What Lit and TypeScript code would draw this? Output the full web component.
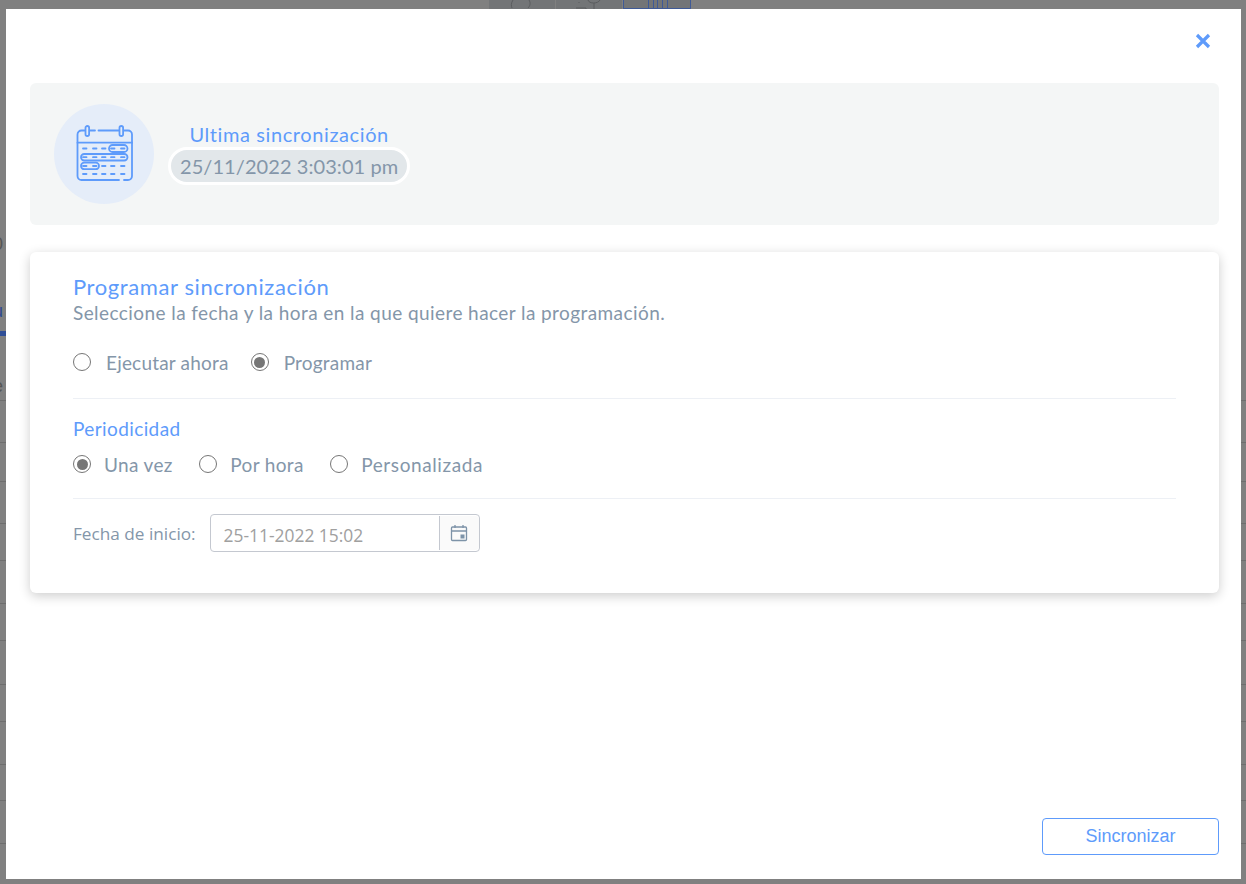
import { LitElement, html, css, svg } from "lit";
import { customElement } from "lit/decorators.js";

const ROWS = [171, 42, 39, 42, 37, 43, 37, 44, 37, 43, 36, 43];

@customElement("app-root")
export class AppRoot extends LitElement {
  static styles = css`
    :host {
      display: block;
      position: relative;
      width: 1246px;
      height: 884px;
      overflow: hidden;
      background: #808080;
      font-family: "Lato", "Liberation Sans", sans-serif;
    }
    .backdrop { position: absolute; inset: 0; overflow: hidden; }
    .thumbs { position: absolute; left: 489px; top: 0; display: flex; gap: 1px; height: 9px; }
    .thumb { width: 66px; background: #737577; }
    .thumb svg { display: block; width: 100%; height: 100%; }
    .thumb.blue { border: 1px solid #3f5a96; border-top: 0; box-sizing: border-box; width: 68px; }
    .rows { position: absolute; left: 0; right: 0; top: 230px; }
    .row { border-bottom: 1px solid #6e6e6e; box-sizing: border-box; }
    .tab { position: absolute; left: 0; top: 331px; width: 6px; height: 5px; background: #304f97; }
    .glyph { position: absolute; left: -7px; color: #555; font-size: 18px; line-height: 20px; font-family: "Liberation Sans", sans-serif; }
    .g1 { top: 234px; }
    .g2 { top: 301px; color: #2e4a8f; }
    .g3 { top: 376px; }

    .modal {
      position: absolute;
      left: 6px;
      top: 9px;
      width: 1235px;
      height: 870px;
      box-sizing: border-box;
      background: #fff;
      padding: 0 22px 24px 24px;
      display: flex;
      flex-direction: column;
    }
    .close { height: 74px; display: flex; justify-content: flex-end; padding: 24px 8px 0 0; box-sizing: border-box; }
    .close svg { width: 16px; height: 16px; }
    .status {
      height: 142px;
      background: #f4f6f6;
      border-radius: 6px;
      display: flex;
      align-items: center;
      padding-left: 24px;
      gap: 14px;
      box-sizing: border-box;
    }
    .circle { width: 100px; height: 100px; border-radius: 50%; background: #e5edf9; display: flex; align-items: center; justify-content: center; }
    .circle svg { width: 60px; height: 60px; }
    .meta { display: flex; flex-direction: column; align-items: center; margin-top: -3px; }
    .meta .t { color: #5e9bfb; font-size: 20px; line-height: 26px; letter-spacing: 0.6px; }
    .pill {
      background: #e2e7ea;
      border: 3px solid #fff;
      border-radius: 20px;
      color: #8496a9;
      font-size: 20px;
      line-height: 32px;
      padding: 0 9px;
      letter-spacing: 0.07px;
    }
    .card {
      margin-top: 27px;
      height: 341px;
      box-sizing: border-box;
      background: #fff;
      border-radius: 6px;
      box-shadow: 0 3px 12px rgba(0, 0, 0, 0.2);
      padding: 22px 43px 0 43px;
      display: flex;
      flex-direction: column;
    }
    h2 { margin: 0; font-weight: 400; color: #5e9bfb; font-size: 22px; line-height: 26px; letter-spacing: 0.6px; }
    .sub { color: #8496a9; font-size: 19px; line-height: 26px; letter-spacing: 0.42px; }
    .opts { display: flex; align-items: center; }
    .o1 { margin-top: 18px; height: 36px; padding-bottom: 1px; }
    .o1 label { margin-right: 22px; gap: 15px; letter-spacing: 0.2px; }
    hr { border: 0; border-top: 1px solid #edf0f5; margin: 0; }
    .h1 { margin-top: 17px; }
    h3 { margin: 17px 0 0; font-weight: 400; color: #5e9bfb; font-size: 19px; line-height: 26px; letter-spacing: 0.4px; }
    .o2 { height: 36px; margin-top: 4px; margin-bottom: 1px; }
    .o2 label { margin-right: 26.5px; gap: 13px; }
    .o2 label:last-child { letter-spacing: 0.6px; }
    label { display: flex; align-items: center; color: #8496a9; font-size: 19px; letter-spacing: 0.35px; }
    .radio { width: 18px; height: 18px; border-radius: 50%; border: 1.5px solid #767676; box-sizing: border-box; background: #fff; display: flex; align-items: center; justify-content: center; }
    .radio.on::after { content: ""; width: 11px; height: 11px; border-radius: 50%; background: #767676; }
    .h2 { margin-top: 15px; }
    .date { display: flex; align-items: center; margin-top: 15px; gap: 14px; }
    .date .lbl { color: #8496a9; font-family: "Open Sans", sans-serif; font-size: 17.2px; }
    .field { width: 270px; height: 38px; box-sizing: border-box; border: 1px solid #c4c8d0; border-radius: 4px; display: flex; }
    .val { flex: 1; color: #a0a0a0; font-family: "Open Sans", sans-serif; font-size: 17.4px; padding: 0 12px 0 13px; line-height: 40px; }
    .cal { width: 39px; margin: 1px 0; border-left: 1px solid #c4c8d0; background: #fafafa; border-radius: 0 4px 4px 0; display: flex; align-items: center; justify-content: center; }
    .cal svg { width: 18px; height: 18px; }
    .foot { margin-top: auto; display: flex; justify-content: flex-end; }
    button {
      width: 177px; height: 37px; box-sizing: border-box; border: 1px solid #5e9bfb; border-radius: 4px; padding: 0 0 1px;
      background: #fff; color: #5e9bfb; font-family: "Liberation Sans", Arial, sans-serif; font-size: 18px;
    }
  `;

  private calendarBig() {
    const xs = [9, 19, 28, 37, 47];
    const dash = (y: number) => xs.map((x) => svg`<path d="M${x} ${y}h3.500"/>`);
    return html`<svg viewBox="0 0 60 60" fill="none" stroke="#5e9bfb" stroke-width="1.800" stroke-linecap="round" stroke-linejoin="round">
      <path d="M10.500 6.500H7.500A4 4 0 0 0 3.500 10.500V52a4 4 0 0 0 4 4H45M50 56h4a4 4 0 0 0 4-4V10.500a4 4 0 0 0-4-4h-4M16 6.500h5M24.500 6.500H45"/>
      <rect x="11.500" y="2" width="3.600" height="10" rx="1.800"/>
      <rect x="45.500" y="2" width="3.600" height="10" rx="1.800"/>
      <path d="M3.500 18.700h54.500"/>
      <rect x="35" y="21" width="18.500" height="7" rx="3.500"/>
      <rect x="7" y="30" width="46.500" height="6.500" rx="3.250"/>
      <rect x="7" y="38.700" width="18" height="6.500" rx="3.250"/>
      ${dash(24.5)}
      ${dash(33.2)}
      ${dash(42)}
      ${dash(50)}
    </svg>`;
  }

  private radio(text: string, on = false) {
    return html`<label><span class="radio ${on ? "on" : ""}"></span>${text}</label>`;
  }

  render() {
    return html`
      <div class="backdrop">
        <div class="thumbs">
          <div class="thumb"><svg viewBox="0 0 66 9" fill="none" stroke="#5a5c5e"><path d="M24 0c-2 3-2 6-1 8M40 0c2 3 1 6 -1 8"/></svg></div>
          <div class="thumb"><svg viewBox="0 0 66 9" fill="none" stroke="#5a5c5e"><path d="M23 2v1M20 8h10v1M32 0c1 4 10 4 12 0M38 3v6"/></svg></div>
          <div class="thumb blue"><svg viewBox="0 0 66 8" fill="none" stroke="#3f5a96"><path d="M24.500 0v9M29.500 0v9M33.500 0v9M38.500 0v9M43.500 0v9"/></svg></div>
        </div>
        <div class="rows">${ROWS.map((h) => html`<div class="row" style="height:${h}px"></div>`)}</div>
        <div class="glyph g1">0</div>
        <div class="glyph g2">u</div>
        <div class="glyph g3">e</div>
        <div class="tab"></div>
      </div>
      <div class="modal">
        <div class="close">
          <svg viewBox="0 0 16 16" fill="none" stroke="#5e9bfb" stroke-width="3.200"><path d="M2 2l12 12M14 2L2 14"/></svg>
        </div>
        <div class="status">
          <div class="circle">${this.calendarBig()}</div>
          <div class="meta">
            <div class="t">Ultima sincronización</div>
            <div class="pill">25/11/2022 3:03:01 pm</div>
          </div>
        </div>
        <div class="card">
          <h2>Programar sincronización</h2>
          <div class="sub">Seleccione la fecha y la hora en la que quiere hacer la programación.</div>
          <div class="opts o1">${this.radio("Ejecutar ahora")}${this.radio("Programar", true)}</div>
          <hr class="h1" />
          <h3>Periodicidad</h3>
          <div class="opts o2">${this.radio("Una vez", true)}${this.radio("Por hora")}${this.radio("Personalizada")}</div>
          <hr class="h2" />
          <div class="date">
            <span class="lbl">Fecha de inicio:</span>
            <div class="field">
              <div class="val">25-11-2022 15:02</div>
              <div class="cal">
                <svg viewBox="0 0 18 18" fill="none" stroke="#7d93a8" stroke-width="1.300"><rect x="1.500" y="3" width="15" height="13.500" rx="1"/><path d="M1.500 7h15M5 1v3M13 1v3"/><rect x="10.500" y="10.500" width="4" height="4" fill="#7d93a8" stroke="none"/></svg>
              </div>
            </div>
          </div>
        </div>
        <div class="foot"><button>Sincronizar</button></div>
      </div>
    `;
  }
}
